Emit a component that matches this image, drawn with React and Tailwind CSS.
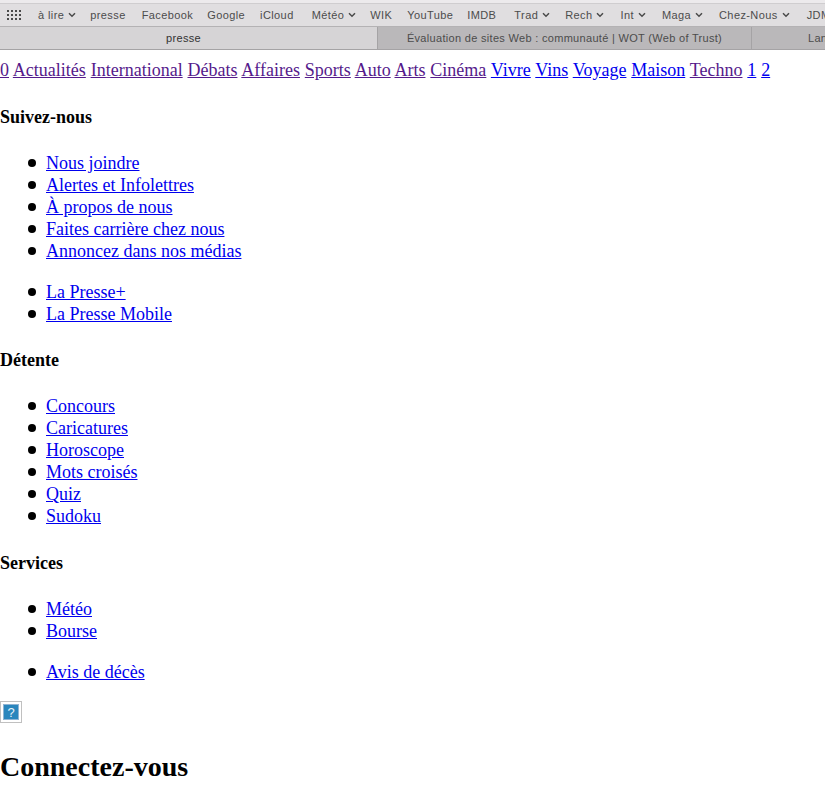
const bookmarks = [
  ['à lire', true, 'ml-[38px]'],
  ['presse', false, 'ml-[14px]'],
  ['Facebook', false, 'ml-[16px]'],
  ['Google', false, 'ml-[14px]'],
  ['iCloud', false, 'ml-[15px]'],
  ['Météo', true, 'ml-[18px]'],
  ['WIK', false, 'ml-[14px]'],
  ['YouTube', false, 'ml-[15px]'],
  ['IMDB', false, 'ml-[14px]'],
  ['Trad', true, 'ml-[18px]'],
  ['Rech', true, 'ml-[15px]'],
  ['Int', true, 'ml-[16px]'],
  ['Maga', true, 'ml-[16px]'],
  ['Chez-Nous', true, 'ml-[16px]'],
  ['JDM', false, 'ml-[17px]'],
]

const sections = [
  ['0', true], ['Actualités', true], ['International', true], ['Débats', true], ['Affaires', true],
  ['Sports', true], ['Auto', true], ['Arts', true], ['Cinéma', true], ['Vivre', false], ['Vins', false],
  ['Voyage', false], ['Maison', false], ['Techno', true], ['1', false], ['2', false],
]

function Chevron() {
  return (
    <svg width="8" height="6" viewBox="0 0 8 6" className="ml-[4px] shrink-0">
      <path d="M1 1.2 L4 4.2 L7 1.2" fill="none" stroke="#4a4a4a" strokeWidth="1.5" />
    </svg>
  )
}

function LinkList({ items, className = '' }) {
  return (
    <ul className={`pl-[28px] ${className}`}>
      {items.map((item) => (
        <li key={item} className="flex items-center">
          <span className="mr-[10px] h-[8px] w-[8px] shrink-0 rounded-full bg-black" />
          <a href="#" className="text-[#0000ee] underline">{item}</a>
        </li>
      ))}
    </ul>
  )
}

function Heading({ children, className = 'mt-[25px]' }) {
  return <h4 className={`mb-[24px] font-bold leading-[22px] ${className}`}>{children}</h4>
}

export default function App() {
  return (
    <div className="h-[802px] overflow-hidden bg-white font-['Liberation_Serif',serif] text-[18px] leading-[22px] text-black">
      {/* Browser chrome */}
      <div className="font-['Liberation_Sans',sans-serif] text-[11px] leading-none tracking-[0.4px] text-[#4c4c4c]">
        <div className="h-[4px] border-b border-[#cfcdcf] bg-[#eceaec]" />
        <div className="flex h-[23px] items-center overflow-hidden whitespace-nowrap border-b border-[#b4b2b4] bg-[#e0dee0]">
          <svg width="14" height="10" viewBox="0 0 14 10" className="ml-[7px] -mr-[21px] shrink-0" fill="#4a4a4a">
            {[0, 4, 8].map((y) => [0, 4, 8, 12].map((x) => <rect key={`${x}-${y}`} x={x} y={y} width="2" height="2" />))}
          </svg>
          {bookmarks.map(([label, menu, gap]) => (
            <span key={label} className={`flex shrink-0 items-center ${gap}`}>
              {label}
              {menu && <Chevron />}
            </span>
          ))}
        </div>
        <div className="flex h-[23px] overflow-hidden whitespace-nowrap border-b border-[#a5a3a5] tracking-[0.31px]">
          <div className="flex w-[377px] shrink-0 items-center justify-center bg-[#d6d4d6] pr-[10px] text-[#333]">presse</div>
          <div className="flex w-[375px] shrink-0 items-center justify-center border-x border-[#a5a3a5] bg-[#bab8ba] text-[#4c4c4c]">
            Évaluation de sites Web : communauté | WOT (Web of Trust)
          </div>
          <div className="flex-1 bg-[#bab8ba] pl-[56px] pt-[6px] text-[#4c4c4c]">Lan</div>
        </div>
      </div>

      {/* Page content */}
      <p className="mt-[9px] whitespace-nowrap [word-spacing:0.33px]">
        {sections.map(([label, visited]) => (
          <span key={label}>
            <a href="#" className={`underline ${visited ? 'text-[#551a8b]' : 'text-[#0000ee]'}`}>{label}</a>{' '}
          </span>
        ))}
      </p>

      <Heading>Suivez-nous</Heading>
      <LinkList items={['Nous joindre', 'Alertes et Infolettres', 'À propos de nous', 'Faites carrière chez nous', 'Annoncez dans nos médias']} />
      <LinkList className="mt-[19px]" items={['La Presse+', 'La Presse Mobile']} />

      <Heading className="mt-[24px]">Détente</Heading>
      <LinkList items={['Concours', 'Caricatures', 'Horoscope', 'Mots croisés', 'Quiz', 'Sudoku']} />

      <Heading>Services</Heading>
      <LinkList items={['Météo', 'Bourse']} />
      <LinkList className="mt-[19px]" items={['Avis de décès']} />

      <div className="mt-[18px] flex h-[22px] w-[22px] items-center justify-center border border-[#c0c0c0] bg-white">
        <svg width="16" height="16" viewBox="0 0 16 16">
          <rect width="16" height="16" fill="#8fb4d4" />
          <rect x="1" y="1" width="14" height="14" fill="#2a86bd" />
          <text x="8" y="13" textAnchor="middle" fontSize="13" fontFamily="Liberation Sans, sans-serif" fill="#e8f2f8">?</text>
        </svg>
      </div>

      <h2 className="mt-[27px] text-[28px] font-bold leading-[33px]">Connectez-vous</h2>
    </div>
  )
}
